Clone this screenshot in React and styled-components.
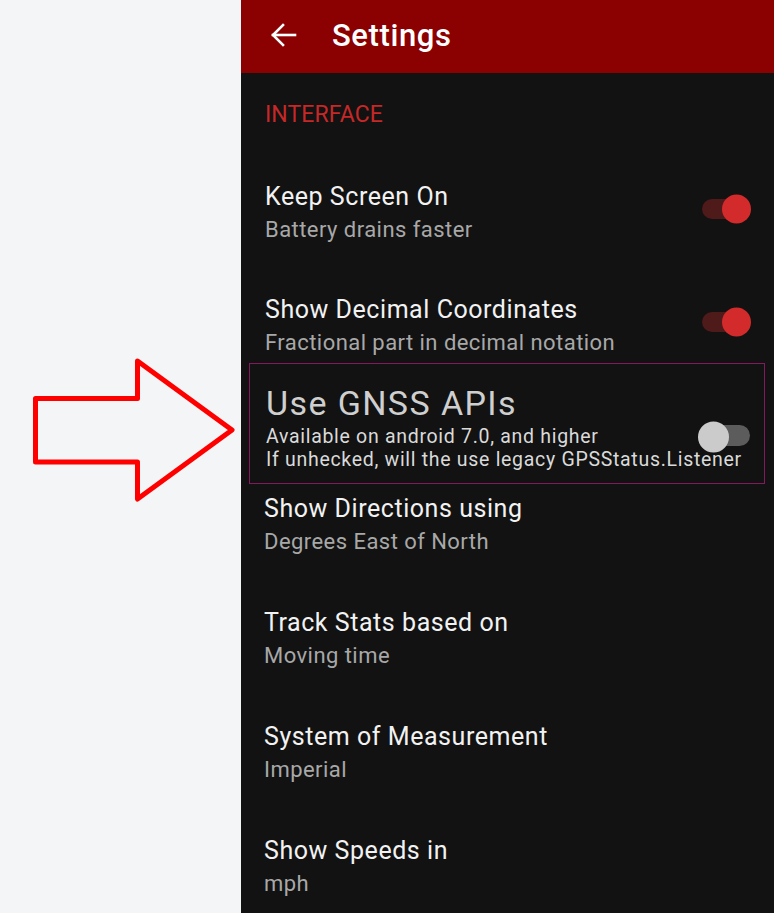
import React from "react";
import styled, { createGlobalStyle } from "styled-components";

const Global = createGlobalStyle`
  html, body { margin: 0; padding: 0; }
  body {
    background: #f4f5f7;
    font-family: Roboto, "Noto Sans", "Liberation Sans", sans-serif;
    overflow: hidden;
  }
`;

const Page = styled.div`
  display: flex;
  width: 774px;
  height: 913px;
  overflow: hidden;
`;

const Gutter = styled.div`
  width: 241px;
  flex: none;
  background: #f4f5f7;
  padding: 355px 0 0 30px;
  box-sizing: border-box;
`;

const Panel = styled.div`
  flex: 1;
  background: #121212;
  display: flex;
  flex-direction: column;
  min-width: 0;
`;

const AppBar = styled.header`
  height: 73px;
  flex: none;
  background: #8b0000;
  display: flex;
  align-items: center;
  padding: 0 0 3px 30px;
  box-sizing: border-box;
  color: #ffffff;
`;

const BarTitle = styled.h1`
  margin: 0 0 0 35px;
  font-size: 31px;
  font-weight: 500;
  letter-spacing: 0.6px;
`;

const Category = styled.div`
  padding: 28px 24px 24px;
  font-size: 23px;
  line-height: 28px;
  letter-spacing: 0.1px;
  color: #c62828;
`;

const Row = styled.div`
  display: flex;
  align-items: flex-start;
  justify-content: space-between;
  height: ${(p) => p.$h || 113}px;
  padding: ${(p) => p.$pt ?? 28}px 24px 0 ${(p) => p.$pl ?? 24}px;
  box-sizing: border-box;
  flex: none;
`;

const TextCol = styled.div`
  display: flex;
  flex-direction: column;
  min-width: 0;
`;

const Title = styled.div`
  font-size: 25px;
  line-height: 32px;
  letter-spacing: 0.55px;
  color: #f2f2f2;
  white-space: nowrap;
`;

const Summary = styled.div`
  font-size: 22px;
  line-height: 34px;
  letter-spacing: 0.45px;
  color: #a8a8a8;
  white-space: nowrap;
`;

const Highlight = styled.div`
  margin-left: 8px;
  width: 516px;
  height: 121px;
  box-sizing: border-box;
  border: 1px solid #85195d;
  padding: 21px 14px 0 16px;
  display: flex;
  align-items: flex-start;
  justify-content: space-between;
  flex: none;
  position: relative;
`;

const BigTitle = styled.div`
  font-size: 34px;
  line-height: 36px;
  letter-spacing: 1.4px;
  color: #cfcfcf;
  margin-bottom: 4px;
  white-space: nowrap;
`;

const Desc = styled.div`
  font-size: 19.5px;
  line-height: 23px;
  letter-spacing: 0.7px;
  color: #dadada;
  white-space: nowrap;
`;

const SwitchTrack = styled.div`
  position: relative;
  flex: none;
  width: 48px;
  height: ${(p) => p.$th}px;
  border-radius: 12px;
  margin-top: ${(p) => p.$mt}px;
  background: ${(p) => (p.$on ? "#4e1a1a" : "#5c5c5c")};
`;

const Thumb = styled.div`
  position: absolute;
  top: 50%;
  width: ${(p) => p.$d}px;
  height: ${(p) => p.$d}px;
  border-radius: 50%;
  transform: translateY(-50%);
  margin-top: ${(p) => p.$dy || 0}px;
  background: ${(p) => (p.$on ? "#d32b2b" : "#cbcbcb")};
  ${(p) => (p.$on ? "right: -1px;" : "left: -4px;")}
`;

const HighlightSwitch = styled.div`
  position: absolute;
  right: 14px;
  top: 61px;
`;

function Switch({ on, mt, th = 20, d = 29, dy }) {
  return (
    <SwitchTrack $on={on} $mt={mt} $th={th}>
      <Thumb $on={on} $d={d} $dy={dy} />
    </SwitchTrack>
  );
}

const BackArrow = () => (
  <svg width="26" height="26" viewBox="0 0 26 26" fill="none" stroke="#fff" strokeWidth="2.6" strokeLinecap="square">
    <path d="M2 13H24" />
    <path d="M12 3L2 13L12 23" />
  </svg>
);

const BigArrow = () => (
  <svg width="210" height="150" viewBox="30 355 210 150">
    <polygon
      points="35.5,398.5 137.5,398.5 137.5,361 232,430 137.5,499 137.5,462 35.5,462"
      fill="none"
      stroke="#ff0000"
      strokeWidth="5"
      strokeLinejoin="round"
    />
  </svg>
);

const lower = [
  ["Show Directions using", "Degrees East of North", 9, 95],
  ["Track Stats based on", "Moving time", 28, 114],
  ["System of Measurement", "Imperial", 28, 114],
  ["Show Speeds in", "mph", 28, 114],
];

export default function App() {
  return (
    <Page>
      <Global />
      <Gutter>
        <BigArrow />
      </Gutter>
      <Panel>
        <AppBar>
          <BackArrow />
          <BarTitle>Settings</BarTitle>
        </AppBar>
        <Category>INTERFACE</Category>
        <Row>
          <TextCol>
            <Title>Keep Screen On</Title>
            <Summary>Battery drains faster</Summary>
          </TextCol>
          <Switch on mt={18} />
        </Row>
        <Row $h={97}>
          <TextCol>
            <Title>Show Decimal Coordinates</Title>
            <Summary>Fractional part in decimal notation</Summary>
          </TextCol>
          <Switch on mt={18} />
        </Row>
        <Highlight>
          <TextCol>
            <BigTitle>Use GNSS APIs</BigTitle>
            <Desc>Available on android 7.0, and higher</Desc>
            <Desc>If unhecked, will the use legacy GPSStatus.Listener</Desc>
          </TextCol>
          <HighlightSwitch>
            <Switch mt={0} th={21} d={31} dy={1.5} />
          </HighlightSwitch>
        </Highlight>
        {lower.map(([t, s, pt, h]) => (
          <Row key={t} $pt={pt} $h={h} $pl={23}>
            <TextCol>
              <Title>{t}</Title>
              <Summary>{s}</Summary>
            </TextCol>
          </Row>
        ))}
      </Panel>
    </Page>
  );
}
